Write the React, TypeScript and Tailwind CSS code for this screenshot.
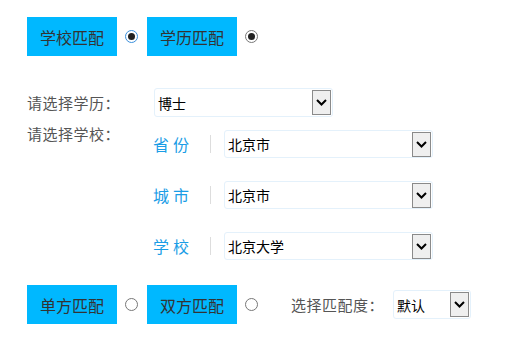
import React from "react";

const font = { fontFamily: '"Noto Sans CJK SC", "Noto Sans", sans-serif' };

function Chevron() {
  return (
    <svg width="11" height="7" viewBox="0 0 11 7" className="block">
      <path d="M1 1 L5.5 5.5 L10 1" fill="none" stroke="#000" strokeWidth="2" />
    </svg>
  );
}

function FakeSelect({ text, className }: { text: string; className: string }) {
  return (
    <div className={`flex items-center justify-between bg-white border border-[#e4f1fb] rounded-[3px] ${className}`}>
      <span className="pl-[3px] text-[14px] leading-none text-black">{text}</span>
      <div className="mr-[1px] w-[19px] h-[25px] border border-[#8a8a8a] bg-[#efefef] flex items-center justify-center">
        <Chevron />
      </div>
    </div>
  );
}

function Radio({ checked, focused }: { checked?: boolean; focused?: boolean }) {
  return (
    <div
      className={`w-[13px] h-[13px] rounded-full border bg-white flex items-center justify-center ${
        focused ? "border-[#3a8fdc]" : "border-[#777777]"
      }`}
    >
      {checked && <div className="w-[7px] h-[7px] rounded-full bg-[#222222]" />}
    </div>
  );
}

function BlueBtn({ text }: { text: string }) {
  return (
    <div className="w-[90px] h-[39px] bg-[#00b8ff] flex items-center justify-center text-[16px] text-[#333333]">
      {text}
    </div>
  );
}

function SubRow({ label, value }: { label: string; value: string }) {
  return (
    <div className="flex items-center h-[28px]">
      <div className="w-[57px] text-[16px] text-[#1a9de6] tracking-[4px] leading-none">{label}</div>
      <div className="w-px h-[18px] bg-[#dddddd]" />
      <FakeSelect text={value} className="ml-[13px] w-[209px] h-[28px]" />
    </div>
  );
}

export default function App() {
  return (
    <div style={font} className="w-[514px] h-[346px] bg-white pl-[27px] pt-[17px] overflow-hidden">
      <div className="flex items-center h-[39px]">
        <BlueBtn text="学校匹配" />
        <div className="ml-[8px]">
          <Radio checked focused />
        </div>
        <div className="ml-[9px]">
          <BlueBtn text="学历匹配" />
        </div>
        <div className="ml-[8px]">
          <Radio checked />
        </div>
      </div>

      <div className="flex items-center mt-[32px] h-[29px]">
        <div className="w-[127px] text-[15px] tracking-[0.5px] text-[#555555] leading-none">请选择学历：</div>
        <FakeSelect text="博士" className="w-[179px] h-[29px]" />
      </div>

      <div className="flex mt-[7px]">
        <div className="w-[126px] text-[15px] tracking-[0.5px] text-[#555555] leading-[20px]">请选择学校：</div>
        <div className="flex flex-col gap-[23px] pt-[6px]">
          <SubRow label="省份" value="北京市" />
          <SubRow label="城市" value="北京市" />
          <SubRow label="学校" value="北京大学" />
        </div>
      </div>

      <div className="flex items-center mt-[25px] h-[39px]">
        <BlueBtn text="单方匹配" />
        <div className="ml-[8px]">
          <Radio />
        </div>
        <div className="ml-[9px]">
          <BlueBtn text="双方匹配" />
        </div>
        <div className="ml-[8px]">
          <Radio />
        </div>
        <div className="ml-[33px] w-[102px] text-[15px] tracking-[0.5px] text-[#555555] leading-none">选择匹配度：</div>
        <FakeSelect text="默认" className="w-[78px] h-[29px]" />
      </div>
    </div>
  );
}
